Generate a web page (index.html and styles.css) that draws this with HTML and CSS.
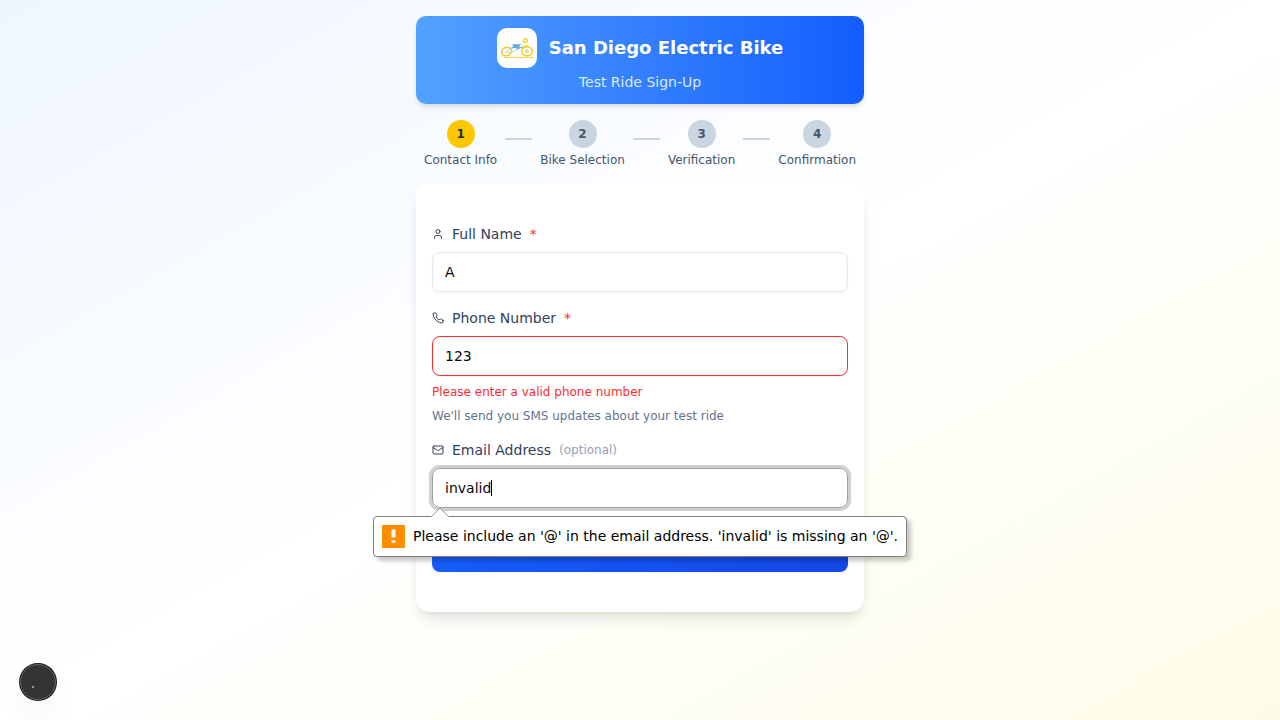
FILE: index.html
```html
<!DOCTYPE html>
<html lang="en">
<head>
<meta charset="utf-8">
<title>San Diego Electric Bike – Test Ride Sign-Up</title>
<link rel="stylesheet" href="styles.css">
</head>
<body>
<main class="page">
  <header class="banner">
    <div class="brand">
      <div class="logo">
        <svg viewBox="0 0 40 40" width="40" height="40" fill="none">
          <g stroke="#fbc91b" stroke-width="1.5">
            <ellipse cx="9.600" cy="23.500" rx="5" ry="4.200" transform="rotate(-20 9.600 23.500)"/>
            <ellipse cx="30" cy="23.300" rx="5.300" ry="4.600"/>
            <circle cx="28.500" cy="12.500" r="1.900" stroke-width="1.200"/>
            <path d="M24.500 18.500l6-1" stroke-width="1"/>
            <path d="M7 29.500H36" stroke-width=".8"/>
          </g>
          <circle cx="30" cy="23.300" r="2.200" fill="#d9dfa0"/>
          <path d="M8 24.500l7-4.500M9 25l8-1.500 4-2.500M8 20h9" stroke="#b9d9cf" stroke-width=".9"/>
          <path d="M14.500 16.200h9.500l-2 3 5-.2-8.500 3.300 1.800-2.300h-6l2.200-2z" fill="#59afe0"/>
        </svg>
      </div>
      <h1 class="brand-name">San Diego Electric Bike</h1>
    </div>
    <p class="tagline">Test Ride Sign-Up</p>
  </header>

  <nav class="steps">
    <div class="step"><span class="dot active">1</span><span>Contact Info</span></div>
    <i class="line"></i>
    <div class="step"><span class="dot">2</span><span>Bike Selection</span></div>
    <i class="line"></i>
    <div class="step"><span class="dot">3</span><span>Verification</span></div>
    <i class="line"></i>
    <div class="step"><span class="dot">4</span><span>Confirmation</span></div>
  </nav>

  <form class="card">
    <div class="field">
      <div class="label">
        <svg class="icon" viewBox="0 0 24 24"><path d="M19 21v-2a4 4 0 0 0-4-4H9a4 4 0 0 0-4 4v2"/><circle cx="12" cy="7" r="4"/></svg>
        <span>Full Name</span><span class="required">*</span>
      </div>
      <div class="input">A</div>
    </div>
    <div class="field">
      <div class="label">
        <svg class="icon" viewBox="0 0 24 24"><path d="M22 16.920v3a2 2 0 0 1-2.180 2 19.790 19.790 0 0 1-8.630-3.070 19.500 19.500 0 0 1-6-6 19.790 19.790 0 0 1-3.070-8.670A2 2 0 0 1 4.110 2h3a2 2 0 0 1 2 1.720 12.840 12.840 0 0 0 .7 2.810 2 2 0 0 1-.45 2.110L8.090 9.910a16 16 0 0 0 6 6l1.270-1.270a2 2 0 0 1 2.110-.45 12.840 12.840 0 0 0 2.810.7A2 2 0 0 1 22 16.920z"/></svg>
        <span>Phone Number</span><span class="required">*</span>
      </div>
      <div class="input invalid">123</div>
      <p class="note error">Please enter a valid phone number</p>
      <p class="note">We'll send you SMS updates about your test ride</p>
    </div>
    <div class="field">
      <div class="label">
        <svg class="icon" viewBox="0 0 24 24"><rect x="2" y="4" width="20" height="16" rx="2"/><path d="m22 7-8.970 5.700a1.940 1.940 0 0 1-2.060 0L2 7"/></svg>
        <span>Email Address</span><span class="optional">(optional)</span>
      </div>
      <div class="input focused">invalid<span class="caret"></span>
        <div class="bubble">
          <svg class="bubble-arrow" width="18" height="10" viewBox="0 0 18 10"><path d="M0 10L1 9 9 1l8 8 1 1z" fill="#fff"/><path d="M1 9L9 1l8 8" fill="none" stroke="#979797"/></svg>
          <svg width="23" height="23" viewBox="0 0 23 23"><rect width="23" height="23" rx="1" fill="#ff8d00"/><path d="M9.500 4.500h4v8h-4z" fill="#fff"/><ellipse cx="11.500" cy="16.500" rx="2" ry="1.600" fill="#fff"/></svg>
          <span class="bubble-text">Please include an '@' in the email address. 'invalid' is missing an '@'.</span>
        </div>
      </div>
    </div>
    <button class="next" type="button" aria-label="Next">
      <svg width="16" height="16" viewBox="0 0 24 24" fill="none" stroke="currentColor" stroke-width="2" stroke-linecap="round" stroke-linejoin="round"><path d="m9 18 6-6-6-6"/></svg>
    </button>
  </form>
</main>
<div class="badge"><i></i></div>
</body>
</html>
```
FILE: styles.css
```css
* { box-sizing: border-box; }
body {
  margin: 0;
  height: 720px;
  overflow: hidden;
  font-family: "DejaVu Sans", sans-serif;
  font-size: 14px;
  line-height: 20px;
  background: linear-gradient(to bottom right, #eff6ff, #fff, #fefce8);
}
h1, p { margin: 0; }
svg { display: block; flex: none; }
.page { width: 448px; margin: 0 auto; padding-top: 16px; }
.banner {
  height: 88px;
  padding: 12px;
  border-radius: 10px;
  background: linear-gradient(to right, #51a2ff, #155dfc);
  box-shadow: 0 4px 6px -1px rgba(0,0,0,.1), 0 2px 4px -2px rgba(0,0,0,.1);
  text-align: center;
}
.brand { display: flex; align-items: center; justify-content: center; gap: 12px; }
.logo { width: 40px; height: 40px; border-radius: 10px; background: #fff; }
.brand-name { font-size: 18px; line-height: 28px; font-weight: 700; color: #fff; }
.tagline { margin-top: 4px; color: #dbeafe; }
.steps { display: flex; align-items: center; margin-top: 16px; padding: 0 8px; }
.step { display: flex; flex-direction: column; align-items: center; gap: 4px; font-size: 12px; line-height: 16px; color: #45556c; }
.dot { display: flex; align-items: center; justify-content: center; width: 28px; height: 28px; border-radius: 50%; background: #cad5e2; font-weight: 700; }
.dot.active { background: #fdc700; color: #1d293d; }
.line { flex: 1; height: 2px; margin: 0 8px 10px; background: #cad5e2; }
.card {
  display: flex;
  flex-direction: column;
  gap: 16px;
  height: 428px;
  margin-top: 16px;
  padding: 40px 16px;
  border-radius: 14px;
  background: #fff;
  box-shadow: 0 10px 15px -3px rgba(0,0,0,.1), 0 4px 6px -4px rgba(0,0,0,.1);
}
.field { display: flex; flex-direction: column; gap: 8px; }
.label { display: flex; align-items: center; gap: 8px; color: #314158; }
.icon { width: 12px; height: 12px; fill: none; stroke: currentColor; stroke-width: 2; stroke-linecap: round; stroke-linejoin: round; }
.required { color: #fb2c36; }
.optional { font-size: 12px; color: #90a1b9; }
.input {
  display: flex;
  align-items: center;
  height: 40px;
  padding: 0 12px;
  border: 1px solid #e2e8f0;
  border-radius: 8px;
  box-shadow: 0 1px 2px rgba(0,0,0,.05);
  color: #0a0a0a;
}
.input.invalid { border-color: #fb2c36; }
.input.focused { position: relative; border-color: #a1a1a1; box-shadow: 0 0 0 3px #d0d0d0; }
.caret { width: 1px; height: 16px; background: #000; }
.note { font-size: 12px; line-height: 16px; color: #62748e; }
.note.error { color: #fb2c36; }
.bubble {
  position: absolute;
  top: 47px;
  left: -60px;
  display: flex;
  align-items: center;
  gap: 8px;
  width: 534px;
  height: 41px;
  padding: 0 8px;
  border: 1px solid #808080;
  border-radius: 4px;
  background: #fff;
  box-shadow: 4px 4px 4px rgba(0,0,0,.22);
  color: #000;
  white-space: nowrap;
}
.bubble-text { padding-bottom: 2px; }
.bubble-arrow { position: absolute; left: 57px; top: -10px; }
.next {
  display: flex;
  align-items: center;
  justify-content: flex-end;
  height: 40px;
  flex: none;
  margin-top: 8px;
  padding: 0 122px 0 0;
  border: 0;
  border-radius: 8px;
  background: linear-gradient(to right, #155dfc, #1447e6);
  color: #fff;
}
.badge {
  position: absolute;
  left: 20px;
  top: 664px;
  width: 36px;
  height: 36px;
  border: 1px solid #666;
  border-radius: 50%;
  background: #333;
  box-shadow: 0 0 0 1px #171717, 0 16px 32px -8px rgba(0,0,0,.14);
}
.badge i { position: absolute; left: 11px; top: 21px; width: 2px; height: 2px; background: #999; }
```
